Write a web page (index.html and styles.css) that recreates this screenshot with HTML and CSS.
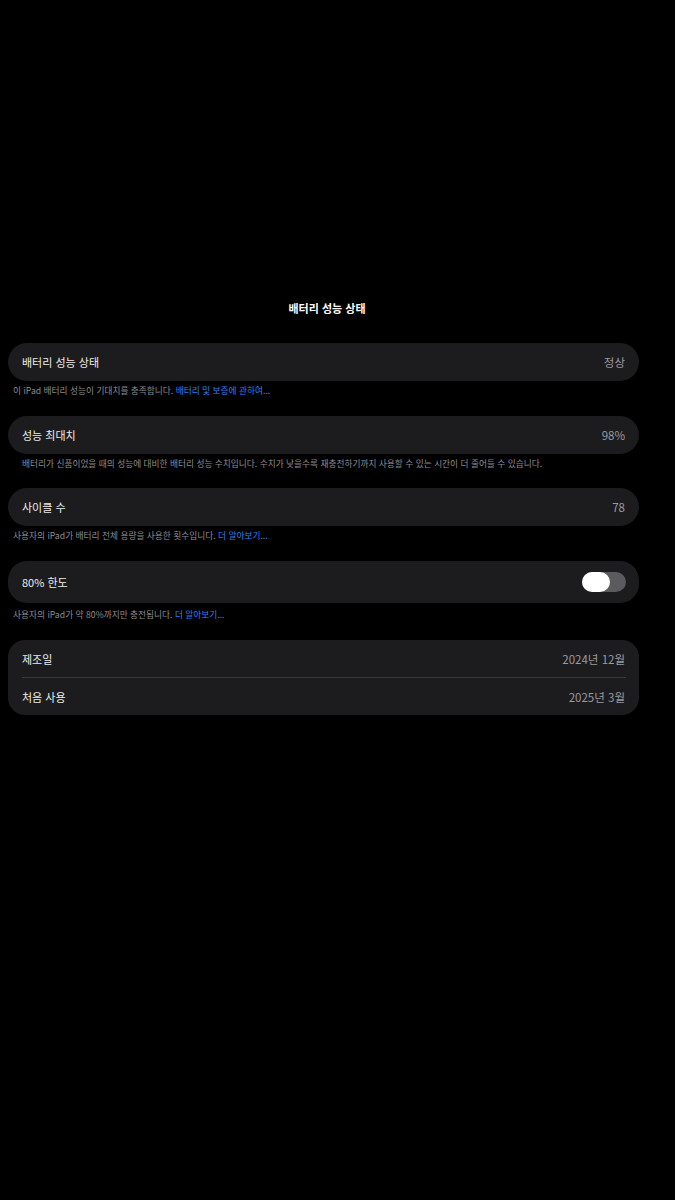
FILE: index.html
```html
<!DOCTYPE html>
<html lang="ko">
<head>
<meta charset="utf-8">
<link rel="stylesheet" href="styles.css">
</head>
<body>
<div class="page">
  <h1 class="title">배터리 성능 상태</h1>

  <div class="card">
    <div class="row"><span class="label">배터리 성능 상태</span><span class="value">정상</span></div>
  </div>
  <p class="footer">이 iPad 배터리 성능이 기대치를 충족합니다. <span class="link">배터리 및 보증에 관하여...</span></p>

  <div class="card">
    <div class="row"><span class="label">성능 최대치</span><span class="value">98%</span></div>
  </div>
  <p class="footer indent">배터리가 신품이었을 때의 성능에 대비한 배터리 성능 수치입니다. 수치가 낮을수록 재충전하기까지 사용할 수 있는 시간이 더 줄어들 수 있습니다.</p>

  <div class="card">
    <div class="row"><span class="label">사이클 수</span><span class="value">78</span></div>
  </div>
  <p class="footer">사용자의 iPad가 배터리 전체 용량을 사용한 횟수입니다. <span class="link">더 알아보기...</span></p>

  <div class="card">
    <div class="row tall"><span class="label">80% 한도</span><span class="toggle"><span class="knob"></span></span></div>
  </div>
  <p class="footer last">사용자의 iPad가 약 80%까지만 충전됩니다. <span class="link">더 알아보기...</span></p>

  <div class="card group">
    <div class="row split"><span class="label">제조일</span><span class="value">2024년 12월</span></div>
    <div class="row"><span class="label">처음 사용</span><span class="value">2025년 3월</span></div>
  </div>
</div>
</body>
</html>
```

FILE: styles.css
```css
html, body {
  margin: 0;
  padding: 0;
  background: #000;
}
body {
  font-family: "Noto Sans CJK KR", "Noto Sans", sans-serif;
  color: #fff;
  height: 1200px;
}
.page {
  padding: 300px 36px 0 8px;
}
.title {
  margin: 0 0 27px 0;
  text-align: center;
  font-size: 11px;
  line-height: 16px;
  font-weight: 700;
  padding-left: 7px;
}
.card {
  background: #1c1c1e;
  border-radius: 19px;
}
.card.group {
  border-radius: 17px;
}
.row {
  height: 38px;
  display: flex;
  align-items: center;
  justify-content: space-between;
  padding: 0 14px;
  font-size: 11px;
}
.row.tall {
  height: 42px;
}
.card.group .row {
  height: 37px;
}
.row.split {
  position: relative;
}
.row.split::after {
  content: "";
  position: absolute;
  left: 14px;
  right: 13px;
  bottom: -1px;
  height: 1px;
  background: #38383a;
}
.card.group .row + .row {
  margin-top: 1px;
}
.label {
  color: #ececec;
}
.value {
  color: #9a9aa0;
  font-size: 11.5px;
}
.footer {
  margin: 5px 0 20px 5px;
  font-size: 8.7px;
  line-height: 10px;
  height: 10px;
  color: #8d8d93;
  white-space: nowrap;
}
.footer.indent {
  margin-left: 14px;
  margin-bottom: 19px;
}
.footer.last {
  margin-top: 7px;
  margin-bottom: 20px;
}
.link {
  color: #2f7ff5;
}
.toggle {
  width: 44px;
  height: 20px;
  border-radius: 10px;
  background: #5b5b5f;
  display: flex;
  align-items: center;
  margin-right: -1px;
}
.knob {
  width: 28px;
  height: 20px;
  border-radius: 10px;
  background: #fff;
}
```
